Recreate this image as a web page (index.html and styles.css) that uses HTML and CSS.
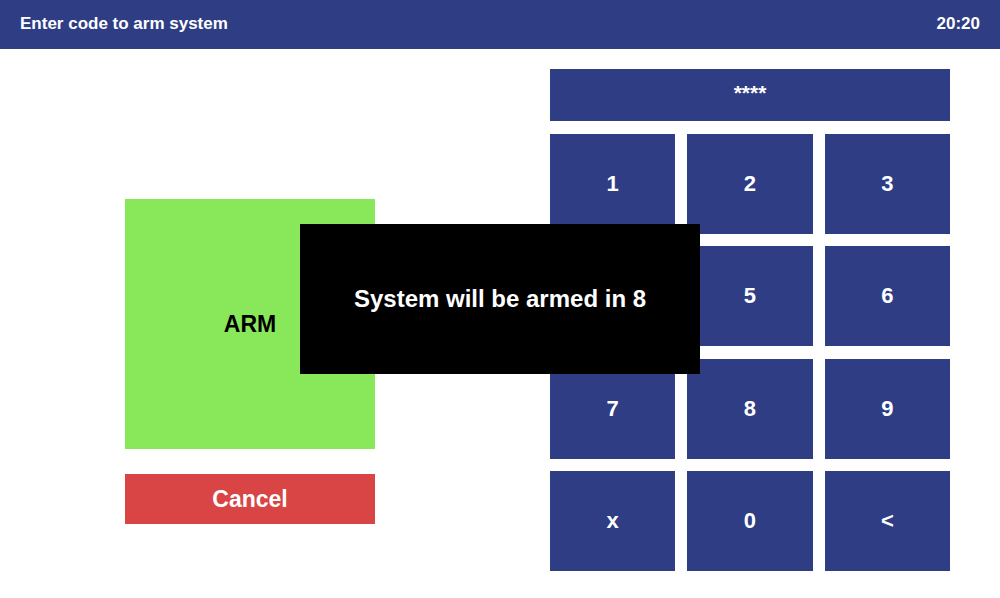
FILE: index.html
```html
<!DOCTYPE html>
<html lang="en">
<head>
<meta charset="utf-8">
<title>Arm system</title>
<link rel="stylesheet" href="styles.css">
</head>
<body>
<header class="topbar">
  <span class="title">Enter code to arm system</span>
  <span class="clock">20:20</span>
</header>
<main class="main">
  <section class="actions">
    <button class="arm">ARM</button>
    <button class="cancel">Cancel</button>
  </section>
  <section class="keypad">
    <div class="display">****</div>
    <div class="keys">
      <button class="key">1</button>
      <button class="key">2</button>
      <button class="key">3</button>
      <button class="key">4</button>
      <button class="key">5</button>
      <button class="key">6</button>
      <button class="key">7</button>
      <button class="key">8</button>
      <button class="key">9</button>
      <button class="key">x</button>
      <button class="key">0</button>
      <button class="key">&lt;</button>
    </div>
  </section>
</main>
<div class="modal">System will be armed in 8</div>
</body>
</html>
```
FILE: styles.css
```css
* { box-sizing: border-box; }
html, body { margin: 0; padding: 0; }
body {
  width: 1000px;
  height: 598px;
  overflow: hidden;
  background: #ffffff;
  font-family: "Liberation Sans", Arial, sans-serif;
  font-weight: bold;
}
button {
  font-family: inherit;
  font-weight: bold;
  border: none;
  margin: 0;
  padding: 0;
  cursor: pointer;
}
.topbar {
  height: 49px;
  background: #2e3d84;
  color: #ffffff;
  display: flex;
  align-items: center;
  justify-content: space-between;
  padding: 0 20px 1px 20px;
  font-size: 17px;
}
.main {
  display: flex;
  align-items: flex-start;
  padding: 20px 0 0 125px;
  gap: 175px;
}
.actions {
  margin-top: 130px;
  display: flex;
  flex-direction: column;
  gap: 25px;
  width: 250px;
}
.arm {
  height: 250px;
  background: #88e85a;
  color: #000000;
  font-size: 23px;
}
.cancel {
  height: 50px;
  background: #d94545;
  color: #ffffff;
  font-size: 23px;
}
.keypad {
  width: 400px;
  display: flex;
  flex-direction: column;
  gap: 13px;
}
.display {
  height: 52px;
  background: #2e3d84;
  color: #ffffff;
  font-size: 21px;
  padding-bottom: 4px;
  display: flex;
  align-items: center;
  justify-content: center;
}
.keys {
  display: grid;
  grid-template-columns: repeat(3, 1fr);
  grid-template-rows: repeat(4, 100px);
  column-gap: 12px;
  row-gap: 12.33px;
}
.key {
  background: #2e3d84;
  color: #ffffff;
  font-size: 22px;
}
.modal {
  position: fixed;
  left: 300px;
  top: 224px;
  width: 400px;
  height: 150px;
  background: #000000;
  color: #ffffff;
  font-size: 24px;
  display: flex;
  align-items: center;
  justify-content: center;
}
```
